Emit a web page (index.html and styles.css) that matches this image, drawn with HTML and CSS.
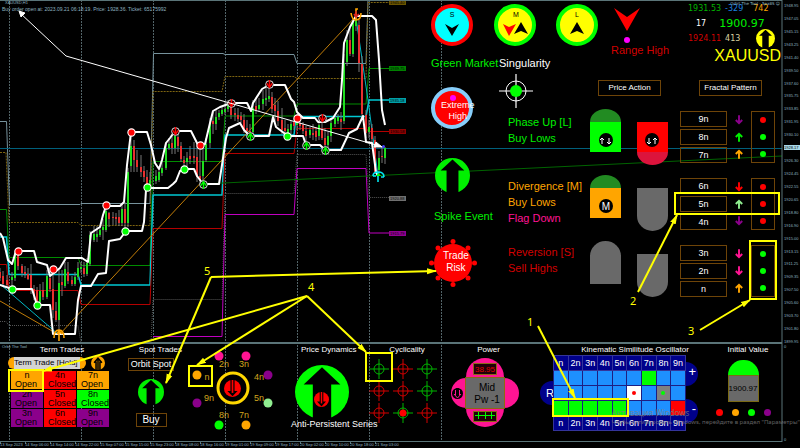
FILE: index.html
```
<!DOCTYPE html>
<html lang="en">
<head>
<meta charset="utf-8">
<meta name="viewport" content="width=device-width, initial-scale=1">
<title>XAUUSD,H1</title>
<link rel="stylesheet" href="styles.css">
</head>
<body>
<svg class="defs" aria-hidden="true">
  <symbol id="disc-up" viewBox="0 0 100 100"><circle cx="50" cy="50" r="50" fill="currentColor"/><path fill="#000" d="M50 4L84 36H67V100H33V36H16Z"/></symbol>
  <symbol id="disc-down" viewBox="0 0 100 100"><circle cx="50" cy="50" r="50" fill="currentColor"/><path fill="#000" d="M50 96L80 64H62V0H38V64H20Z"/><path fill="currentColor" d="M45 0H55V76H45Z"/></symbol>
  <symbol id="disc-line" viewBox="0 0 100 100"><circle cx="50" cy="50" r="50" fill="currentColor"/><path fill="none" stroke="#000" stroke-width="11" d="M50 100V14M22 48L50 16L78 48M36 40V100M64 40V100"/></symbol>
  <symbol id="up" viewBox="0 0 10 12"><path fill="none" stroke="currentColor" stroke-width="2.400" d="M5 12V2M1 6L5 2L9 6"/></symbol>
  <symbol id="down" viewBox="0 0 10 12"><path fill="none" stroke="currentColor" stroke-width="2.400" d="M5 0V10M1 6L5 10L9 6"/></symbol>
  <symbol id="target" viewBox="0 0 20 20"><path fill="none" stroke="currentColor" d="M0 10H20M10 0V20"/><circle cx="10" cy="10" r="5" fill="none" stroke="currentColor"/></symbol>
  <symbol id="red-dot" viewBox="0 0 10 10"><circle cx="5" cy="5" r="3.3" fill="#f00" stroke="#fff" stroke-width="1"/></symbol>
  <symbol id="green-dot" viewBox="0 0 10 10"><circle cx="5" cy="5" r="3.3" fill="#0f0" stroke="#fff" stroke-width="1"/></symbol>
  <symbol id="sell" viewBox="0 0 10 10"><circle cx="5" cy="5" r="3.5" fill="#200" stroke="#ddd" stroke-width=".9"/><path fill="none" stroke="#f00" stroke-width="1.2" d="M5 1V7M2.5 4L5 7.5L7.5 4"/></symbol>
  <symbol id="buy" viewBox="0 0 10 10"><circle cx="5" cy="5" r="3.5" fill="#020" stroke="#ddd" stroke-width=".9"/><path fill="none" stroke="#0f0" stroke-width="1.2" d="M5 9V3M2.5 6L5 2.5L7.5 6"/></symbol>
</svg>

<main class="terminal">
  <svg class="chart" viewBox="0 0 800 448" preserveAspectRatio="none" aria-label="XAUUSD hourly chart">
    <g class="grid"><path d="M9.500 0V442M81.500 0V442M153.500 0V442M225.500 0V442M297.500 0V442M369.500 0V442M441.500 0V442"/></g>
    <g class="levels">
      <path stroke="#76929c" d="M0 121.500H6.500L9.500 204.500H80L81 203.500H150L153.500 53.500H223L225 54.500H294L297 63.500H366L368 0"/>
      <path stroke="#7d6410" stroke-dasharray="2 1" d="M0 152.500H6L9 222.500H78L81 225.500H150L153 91.500H222L225 76.500H294L297 78.500H366L368 2.500H389"/>
      <path stroke="#008c00" d="M0 209.500H6.500L9 257.500H78L81 265.500H150L153 161.500H222L225 116H294L297 104H366L369 68.500H389"/>
      <path stroke="#00c8d2" stroke-width="1.500" d="M0 237H6.500L9 274.500H78L81 285H150L153 195H222L225 135H294L296 116.500H366L369 100H389"/>
      <path stroke="#b40000" d="M0 264.500H6.500L9 290.500H78L81 304.500H150L153 228.500H222L225 153.500H294L297 128.500H366L369 131.500H389"/>
      <path stroke="#555" stroke-dasharray="1 1" d="M0 321.500H6L9 325.500H78L81 343M151 343L153 299.500H222L225 193.500H294L297 154.500H366L369 197.500H389"/>
      <path stroke="#c000c0" d="M153 336.500H222L225 214.500H294L297 168.500H366L369 233H389"/>
    </g>
    <path class="bid" d="M0 148.500H782"/>
    <path class="trend green" d="M203 184L782 156"/>
    <path class="trend aqua" d="M0 284L59 335M356 18L368 100L378 176"/>
    <path class="trend orange" d="M0 301L59 335L356 16"/>
    <path class="wicks" d="M0 268V281M3 271V286M7 275V287M12 272V286M15 250V281M18 248V270M22 264V277M25 266V278M28 268V280M31 264V294M34 285V300M37 287V304M40 284V304M43 282V300M47 270V299M50 268V292M53 270V318M56 302V322M59 270V334M62 270V296M65 262V288M68 262V284M72 276V286M75 272V286M78 262V280M81 262V273M84 262V277M87 258V276M90 231V266M94 226V242M97 226V242M100 226V237M103 219V240M106 206V232M109 212V227M113 212V225M116 213V225M119 210V226M122 204V226M125 202V229M128 168V227M131 133V172M134 140V172M137 150V172M141 155V177M144 166V182M147 170V188M150 172V188M156 170V184M159 166V182M162 160V176M166 142V170M169 138V150M172 136V154M175 130V154M178 134V152M181 142V162M184 156V168M187 152V166M190 146V164M194 142V164M197 146V182M200 150V184M203 148V184M206 138V162M210 118V148M213 112V134M216 110V130M219 110V120M222 107V116M225 102V115M228 100V112M231 103V119M235 108V121M238 108V122M241 112V123M244 114V133M247 120V134M250 124V136M253 100V134M256 98V114M259 98V112M263 90V110M266 88V106M269 84V102M272 92V113M275 98V124M278 101V126M282 108V134M285 120V134M288 124V136M291 121V134M294 119V130M297 114V130M300 119V130M303 122V134M306 126V144M310 127V138M313 124V140M316 127V141M319 120V140M322 118V140M325 128V150M328 132V147M331 120V142M335 115V127M338 114V124M341 112V130M344 54V124M347 30V66M350 26V56M353 18V57M356 15V31M359 20V72M362 56V118M366 110V138M369 120V138M372 124V144M375 136V174M379 151V176M382 147V163M385 147V164"/>
    <path class="bodies up" d="M12 277V280M15 253V278M40 291V302M47 276V297M59 283V320M65 269V286M75 277V284M78 268V277M81 267V269M87 263V274M90 235V264M94 234V240M97 234V237M100 230V235M103 227V230M106 211V230M122 209V223M128 172V223M131 146V166M150 180V184M156 176V181M159 172V180M162 168V173M166 148V168M169 144V148M175 136V148M187 158V162M203 161V176M206 144V160M210 123V143M216 117V124M219 113V117M222 110V114M225 109V112M228 104V109M253 108V132M259 105V109M263 99V104M266 98V100M269 96V99M288 129V133M291 124V130M297 120V125M310 130V135M319 125V136M328 136V145M331 123V136M335 118V124M338 117V121M344 63V121M347 40V62M353 21V54M356 20V26M369 127V132M379 158V170M385 148V158"/>
    <path class="bodies down" d="M0 272V278M3 276V284M7 280V285M18 252V266M22 266V273M25 272V274M28 274V279M31 275V290M34 289V296M37 290V302M43 290V297M50 278V289M53 289V310M56 311V320M62 282V285M68 272V281M72 280V284M84 268V274M109 213V219M113 217V218M116 217V219M119 217V223M125 209V223M134 146V160M137 160V167M141 167V172M144 171V177M147 177V187M172 143V148M178 137V146M181 146V159M184 160V163M190 156V159M194 156V158M197 157V177M200 176V180M213 121V124M231 106V115M235 113V115M238 115V119M241 116V120M244 120V130M247 128V131M250 131V132M256 106V110M272 97V109M275 105V111M278 111V121M282 120V130M285 128V131M294 122V126M300 123V126M303 125V131M306 131V136M313 133V135M316 131V137M322 130V138M325 138V145M341 119V122M350 40V54M359 25V63M362 64V114M366 115V133M372 128V139M375 140V172M382 156V157"/>
    <g class="bands">
      <path d="M0 233L3 238L8 260L12 264L16 251H34L37 262L47 265L50 276L60 268L66 258H82L88 262L91 233L100 227L103 215L106 206H120L124 202L127 165L131 132H147L151 145L155 163L159 169L162 160L166 143L170 138L175 131H191L194 137L198 145L205 144L210 123L213 111L220 107L231 103H247L251 111L253 103L262 89L269 85H285L291 99L294 102L297 112L303 118H315L318 122H325L333 118L340 107L342 80L344 43L350 27L356 16H372L376 20L379 60L382 110L385 125"/>
      <path d="M0 285L12 289H32L37 305H50L53 334H75L78 300L81 286H91L98 274L106 273L109 241L120 239L126 231H142L144 222L146 190L148 188H168L173 184L176 181L180 171L185 169H194L197 176L203 184H219L222 165L226 138L229 128L240 123L244 130L250 136H269L273 117L276 127L288 136H303L306 145H320L325 150H341L349 133L357 129L363 116L366 142L372 143L376 172L378 176"/>
    </g>
    <g>
      <use href="#red-dot" x="13" y="246" width="11" height="11"/><use href="#red-dot" x="48" y="264" width="11" height="11"/><use href="#red-dot" x="101" y="200" width="11" height="11"/><use href="#red-dot" x="126" y="127" width="11" height="11"/><use href="#red-dot" x="195" y="140" width="11" height="11"/><use href="#red-dot" x="292" y="113" width="11" height="11"/>
      <use href="#green-dot" x="7" y="284" width="11" height="11"/><use href="#green-dot" x="32" y="300" width="11" height="11"/><use href="#green-dot" x="120" y="226" width="11" height="11"/><use href="#green-dot" x="142" y="182" width="11" height="11"/><use href="#green-dot" x="179" y="164" width="11" height="11"/><use href="#green-dot" x="282" y="131" width="11" height="11"/>
      <use href="#sell" x="170" y="126" width="11" height="11"/><use href="#sell" x="226" y="98" width="11" height="11"/><use href="#sell" x="264" y="79" width="11" height="11"/><use href="#sell" x="317" y="113" width="11" height="11"/>
      <use href="#buy" x="198" y="179" width="11" height="11"/><use href="#buy" x="245" y="131" width="11" height="11"/><use href="#buy" x="301" y="140" width="11" height="11"/><use href="#buy" x="320" y="145" width="11" height="11"/>
    </g>
    <path fill="none" stroke="#ffa500" stroke-width="1.600" d="M351 13Q352 20 356 20Q361 20 361 13M356 19V9H358"/><path fill="none" stroke="#d22" stroke-width="1.500" d="M356 11V17M354 14L356 17L359 14"/>
    <path fill="none" stroke="#ffa500" stroke-width="1.600" d="M54 338Q54 330 59 330Q64 330 64 338M59 330V341M57 334L59 331L62 334"/>
    <path fill="none" stroke="#00e5ee" stroke-width="1.600" d="M373 176Q373 172 378 172Q384 172 384 177M373 176H376M381 177H384M378 172V182"/><path fill="#0f0" d="M376 176L378.500 173L381 176Z"/>
    <g class="order"><path d="M20 13L66 56L383 147"/><path class="head" d="M19 11L25 13L21 17ZM382 147L374 147L376 142Z"/></g>
    <circle cx="383.500" cy="146.500" r="1.500" fill="#44f"/>
    <g class="tags">
      <rect x="389" y="0" width="17" height="5" fill="#6b5500"/><text x="390" y="4">1945.40</text>
      <rect x="389" y="66" width="17" height="5" fill="#008000"/><text x="390" y="70">1939.75</text>
      <rect x="389" y="98" width="17" height="5" fill="#00a0a8"/><text x="390" y="102">1935.18</text>
      <rect x="389" y="129" width="17" height="5" fill="#900000"/><text x="390" y="133">1930.58</text>
      <rect x="389" y="196" width="17" height="5" fill="#707070"/><text x="390" y="200">1920.88</text>
      <rect x="389" y="231" width="17" height="5" fill="#900090"/><text x="390" y="235">1915.79</text>
    </g>
    <path class="frame" d="M0 .500H782M782 0V442M0 441.500H782"/><path class="divider" d="M0 343H782"/>
    <path class="frame" d="M.500 442V444M25.500 442V444M50.500 442V444M75.500 442V444M100.500 442V444M125.500 442V444M150.500 442V444M175.500 442V444M200.500 442V444M225.500 442V444M250.500 442V444M275.500 442V444M300.500 442V444M325.500 442V444M350.500 442V444M375.500 442V444"/>
  </svg>

  <section class="dashboard">
    <header class="caption"><span class="symbol">XAUUSD,H1</span><span>Buy order open at: 2023.09.21 06:18:19. Price: 1928.36. Ticket: 65175992</span></header>

    <div class="col signals">
      <svg class="gauge" viewBox="0 0 42 42"><circle cx="21" cy="21" r="19" fill="#0ff" stroke="#f00" stroke-width="4"/><text x="21" y="13">S</text><path d="M14 20L21 32L28 20L21 24Z"/></svg>
      <p class="label lime">Green Market</p>
      <div class="ball">
        <svg class="gauge" viewBox="0 0 42 42"><circle cx="21" cy="21" r="19" fill="#f00" stroke="#87cefa" stroke-width="4"/><circle cx="22" cy="11" r="3" fill="#f0f"/></svg>
        <span class="over extreme">Extreme<br>High</span>
      </div>
      <svg class="spike lime"><use href="#disc-up"/></svg>
      <p class="label lime event">Spike Event</p>
      <div class="ball risk">
        <svg class="burr" viewBox="0 0 48 48"><g fill="#f00"><circle cx="24" cy="24" r="19"/><circle cx="24" cy="2.500" r="2.500"/><circle cx="24" cy="45.500" r="2.500"/><circle cx="2.500" cy="24" r="2.500"/><circle cx="45.500" cy="24" r="2.500"/><circle cx="9" cy="9" r="2.500"/><circle cx="39" cy="9" r="2.500"/><circle cx="9" cy="39" r="2.500"/><circle cx="39" cy="39" r="2.500"/></g></svg>
        <span class="over trade">Trade<br>Risk</span>
      </div>
    </div>

    <div class="col phases">
      <div class="pair-top">
        <svg class="gauge" viewBox="0 0 42 42"><circle cx="21" cy="21" r="19" fill="#ff0" stroke="#0f0" stroke-width="4"/><text x="22" y="13">M</text><path fill="#f00" d="M9 20L15 32L22 20L15 23Z"/><path d="M20 30L27 18L34 30L27 27Z"/></svg>
        <svg class="gauge" viewBox="0 0 42 42"><circle cx="21" cy="21" r="19" fill="#ff0" stroke="#0f0" stroke-width="4"/><text x="21" y="13">L</text><path d="M14 30L21 18L28 30L21 27Z"/></svg>
      </div>
      <p class="label singular">Singularity</p>
      <svg class="cross" viewBox="0 0 34 34"><g fill="none" stroke="#fff"><circle cx="17" cy="17" r="10"/><path d="M0 17H34M17 0V34" stroke-width="1.200"/></g><circle cx="17" cy="17" r="6" fill="#0f0"/></svg>
      <div class="phase lime">Phase Up [L]<br>Buy Lows</div>
      <div class="phase amber">Divergence [M]<br>Buy Lows<br><span class="pink">Flag Down</span></div>
      <div class="phase red">Reversion [S]<br>Sell Highs</div>
    </div>

    <div class="col action">
      <div class="range"><svg class="chev" viewBox="0 0 26 36"><path fill="#f00" d="M0 0L13 23L26 0L13 9Z"/><circle cx="13" cy="32" r="3" fill="#f0f"/></svg></div>
      <p class="label red high">Range High</p>
      <button class="box title" type="button">Price Action</button>
      <div class="caps">
        <svg viewBox="0 0 31 43"><path fill="#228b22" d="M0 13A15.500 13 0 0 1 31 13Z"/><path fill="#0f0" d="M0 13H31V43H0Z"/><circle cx="16" cy="31" r="7"/><path class="tick" d="M12 35V29M10 31L12 29L14 31M19 29V35M17 33L19 35L21 33"/></svg>
        <svg class="drop" viewBox="0 0 31 43"><path fill="#dc143c" d="M0 30A15.500 13 0 0 0 31 30Z"/><path fill="#f00" d="M0 0H31V30H0Z"/><circle cx="15" cy="18" r="7"/><path class="tick" d="M12 16V22M10 20L12 22L14 20M18 22V16M16 18L18 16L20 18"/></svg>
      </div>
      <div class="caps">
        <svg viewBox="0 0 31 43"><path fill="#228b22" d="M0 13A15.500 13 0 0 1 31 13Z"/><path fill="#ffa500" d="M0 13H31V43H0Z"/><circle cx="16" cy="31" r="7"/><text x="16" y="35">M</text></svg>
        <svg class="drop" viewBox="0 0 31 43"><path fill="#696969" d="M0 0H31V28A15.500 15 0 0 1 0 28Z"/></svg>
      </div>
      <div class="caps">
        <svg viewBox="0 0 31 43"><path fill="#696969" d="M0 43H31V15A15.500 15 0 0 0 0 15Z"/></svg>
        <svg class="drop" viewBox="0 0 31 43"><path fill="#696969" d="M0 0H31V28A15.500 15 0 0 1 0 28Z"/></svg>
      </div>
    </div>

    <div class="col fractal">
      <span class="tool-name">Orbit The Tool - 5ea8S ☺</span>
      <div class="quotes"><span class="green">1931.53</span><span class="blue">-329</span><span class="amber last">742</span></div>
      <div class="quotes mid"><span>17</span><strong class="lime">1900.97</strong></div>
      <div class="quotes"><span class="red">1924.11</span><span class="khaki">413</span><svg class="trend-icon"><use href="#disc-up"/></svg></div>
      <h1>XAUUSD</h1>
      <button class="box title" type="button">Fractal Pattern</button>
      <div class="group">
        <div class="keys"><button class="box" type="button">9n</button><button class="box" type="button">8n</button><button class="box" type="button">7n</button></div>
        <div class="arrows"><svg class="purple"><use href="#down"/></svg><svg class="lime"><use href="#up"/></svg><svg class="amber"><use href="#up"/></svg></div>
        <div class="lights"><i class="r"></i><i></i><i></i></div>
      </div>
      <div class="group">
        <div class="keys"><button class="box" type="button">6n</button><button class="box" type="button">5n</button><button class="box" type="button">4n</button></div>
        <div class="arrows"><svg class="bright-red"><use href="#down"/></svg><svg class="pale"><use href="#up"/></svg><svg class="purple"><use href="#down"/></svg></div>
        <div class="lights"><i class="r"></i><i class="r"></i><i class="r"></i></div>
      </div>
      <div class="group">
        <div class="keys"><button class="box" type="button">3n</button><button class="box" type="button">2n</button><button class="box" type="button">n</button></div>
        <div class="arrows"><svg class="pink"><use href="#down"/></svg><svg class="pink"><use href="#down"/></svg><svg class="amber"><use href="#up"/></svg></div>
        <div class="lights"><i></i><i></i><i></i></div>
      </div>
    </div>

    <div class="scale">
      <span>1948.95</span><span>1947.05</span><span>1945.15</span><span>1943.25</span><span>1941.40</span><span>1939.50</span><span>1937.60</span><span>1935.75</span><span>1933.85</span><span>1931.95</span><span>1930.10</span><span class="now">1928.17</span><span>1926.30</span><span>1924.45</span><span>1922.55</span><span>1920.65</span><span>1918.80</span><span>1916.90</span><span>1915.00</span><span>1913.15</span><span>1911.25</span><span>1909.35</span><span>1907.50</span><span>1905.60</span><span>1903.70</span><span>1901.80</span><span>1899.95</span>
    </div>
  </section>

  <section class="tools">
    <div class="panel term">
      <h2>Term Trades</h2>
      <div class="term-head"><span class="pill"><span>Term Trade [Hold]</span></span><svg class="mini amber"><use href="#disc-line"/></svg></div>
      <div class="cells">
        <button class="o" type="button"><b>n</b><span>Open</span></button><button class="r" type="button"><b>4n</b><span>Closed</span></button><button class="o" type="button"><b>7n</b><span>Open</span></button>
        <button class="p" type="button"><b>2n</b><span>Open</span></button><button class="r" type="button"><b>5n</b><span>Closed</span></button><button class="g" type="button"><b>8n</b><span>Closed</span></button>
        <button class="p" type="button"><b>3n</b><span>Open</span></button><button class="r" type="button"><b>6n</b><span>Closed</span></button><button class="p" type="button"><b>9n</b><span>Open</span></button>
      </div>
    </div>

    <div class="panel spot">
      <h2>Spot Trades</h2>
      <button class="box orbit" type="button">Orbit Spot</button>
      <svg class="spot-icon lime"><use href="#disc-up"/></svg>
      <button class="box buy" type="button">Buy</button>
    </div>

    <div class="panel wheel">
      <svg viewBox="0 0 90 90">
        <g stroke="none"><circle cx="33" cy="12" r="4.500" fill="#ff1493"/><circle cx="60" cy="12" r="4.500" fill="#ff1493"/><circle cx="82" cy="31" r="4.500" fill="#8b008b"/><circle cx="82" cy="59" r="4.500" fill="#90ee90"/><circle cx="60" cy="81" r="4.500" fill="#ffa500"/><circle cx="33" cy="81" r="4.500" fill="#0f0"/><circle cx="11" cy="59" r="4.500" fill="#8b008b"/><circle cx="11" cy="31" r="4.500" fill="#ffa500"/></g>
        <circle cx="47" cy="44" r="15" fill="#000" stroke="#ffd700" stroke-width="3"/>
        <use href="#disc-down" x="38" y="36" width="17" height="17" color="#f00"/>
        <text x="21" y="36">n</text><text x="38" y="23">2n</text><text x="58" y="23">3n</text><text x="73" y="36">4n</text><text x="73" y="57">5n</text><text x="58" y="74">7n</text><text x="38" y="74">8n</text><text x="23" y="57">9n</text>
      </svg>
    </div>

    <div class="panel dynamics">
      <h2>Price Dynamics</h2>
      <svg viewBox="0 0 54 54"><use href="#disc-up" width="54" height="54" color="#0f0"/><use href="#disc-down" x="19" y="27" width="15" height="15" color="#f00"/></svg>
      <p>Anti-Persistent Series</p>
    </div>

    <div class="panel cycle">
      <h2>Cyclicality</h2>
      <div class="targets">
        <svg class="green"><use href="#target"/></svg><svg class="red"><use href="#target"/></svg><svg class="green"><use href="#target"/></svg>
        <svg class="red"><use href="#target"/></svg><svg class="red"><use href="#target"/></svg><svg class="green"><use href="#target"/></svg>
        <svg class="red"><use href="#target"/></svg><svg class="green"><use href="#target"/><circle cx="10" cy="10" r="3.500" fill="#f00"/></svg><svg class="red"><use href="#target"/></svg>
      </div>
    </div>

    <div class="panel power">
      <h2>Power</h2>
      <svg viewBox="0 0 70 70">
        <g fill="#ff1493"><circle cx="35" cy="20" r="19"/><circle cx="35" cy="51" r="19"/><circle cx="16" cy="36" r="15"/><circle cx="54" cy="36" r="15"/></g>
        <path fill="#696969" stroke="#8b6914" d="M15.500 20.500H54.500V51.500H15.500Z"/>
        <path fill="#200008" stroke="#8b6914" d="M23.500 6.500H46.500V17.500H23.500ZM23.500 54.500H46.500V64.500H23.500Z"/>
        <use href="#disc-down" x="2" y="31" width="11" height="11" color="#000"/><path fill="none" stroke="#ff1493" d="M5.500 33V38M9.500 33V38M4 37L7.500 41L11 37"/>
        <text class="reading" x="35" y="15">38.95</text><text x="37" y="34">Mid</text><text x="37" y="46">Pw -1</text>
        <path stroke="#0f0" d="M25 58.500H45M28.500 55V62M35.500 55V62M41.500 55V62"/>
      </svg>
    </div>

    <div class="panel osc">
      <h2>Kinematic Similitude Oscillator</h2>
      <div class="osc-body">
        <span class="knob rr">R</span><span class="knob plus">+</span><span class="knob minus">-</span>
        <table>
          <tr><th>n</th><th>2n</th><th>3n</th><th>4n</th><th>5n</th><th>6n</th><th>7n</th><th>8n</th><th>9n</th></tr>
          <tr><td></td><td></td><td></td><td></td><td></td><td></td><td class="g"></td><td></td><td></td></tr>
          <tr><td></td><td></td><td></td><td></td><td></td><td class="w"><i></i></td><td></td><td class="k"><i></i></td><td></td></tr>
          <tr><td class="g"></td><td class="g"></td><td class="g"></td><td class="g"></td><td class="g"></td><td></td><td></td><td></td><td class="r"></td></tr>
          <tr><th>n</th><th>2n</th><th>3n</th><th>4n</th><th>5n</th><th>6n</th><th>7n</th><th>8n</th><th>9n</th></tr>
        </table>
      </div>
    </div>

    <div class="panel initial">
      <h2>Initial Value</h2>
      <div class="dome"></div>
      <div class="value">1900.97</div>
      <div class="beads"><i class="r"></i><i class="o"></i><i class="g"></i><i class="p"></i></div>
    </div>

    <div class="sub-scale"><span>0</span><span>0</span></div>
    <span class="sub-name">Orbit The Tool</span>
  </section>

  <footer class="times"><span>13 Sep 2023</span><span>14 Sep 06:00</span><span>14 Sep 14:00</span><span>14 Sep 22:00</span><span>15 Sep 07:00</span><span>15 Sep 15:00</span><span>15 Sep 23:00</span><span>18 Sep 08:00</span><span>18 Sep 16:00</span><span>19 Sep 01:00</span><span>19 Sep 09:00</span><span>19 Sep 17:00</span><span>20 Sep 02:00</span><span>20 Sep 10:00</span><span>20 Sep 18:00</span><span>21 Sep 03:00</span></footer>

  <div class="watermark"><strong>Активация Windows</strong><span>Чтобы активировать Windows, перейдите в раздел "Параметры"</span></div>

  <svg class="notes" viewBox="0 0 800 448" preserveAspectRatio="none">
    <defs><marker id="tip" markerUnits="userSpaceOnUse" markerWidth="10" markerHeight="8" refX="9" refY="4" orient="auto"><path fill="#ff0" stroke="none" d="M0 1L10 4L0 7Z"/></marker></defs>
    <path d="M9 370H43V391H9ZM189 366H212V386H189ZM366 353H392V381H366ZM553 399H628V416H553ZM675 193H779V214H675ZM750 241H776V299H750Z"/>
    <g marker-end="url(#tip)"><path marker-end="url(#tip)" d="M211 277L166 383"/><path d="M211 277L436 271"/><path d="M307 296L43 371"/><path d="M307 296L197 365"/><path d="M307 296L366 352"/><path d="M538 326L575 398"/><path d="M638 292L677 215"/><path d="M700 330L750 300"/></g>
    <text x="204" y="275">5</text><text x="308" y="291">4</text><text x="527" y="326">1</text><text x="630" y="305">2</text><text x="688" y="335">3</text>
  </svg>
</main>
</body>
</html>
```

FILE: styles.css
```
* { box-sizing: border-box; }
body { margin: 0; background: #000; color: #fff; font-family: "Liberation Sans", Arial, sans-serif; font-size: 11px; }
p, h1, h2 { margin: 0; font-weight: normal; }
button { font: inherit; color: inherit; padding: 0; margin: 0; cursor: pointer; }
svg { display: block; overflow: visible; }
.defs { position: absolute; width: 0; height: 0; }

.terminal { position: relative; min-height: 100vh; overflow: hidden; display: flex; flex-direction: column; }
.chart, .notes { position: absolute; top: 0; left: 0; width: 100%; height: 448px; pointer-events: none; }

.lime { color: #00f000; }
.green { color: #00b400; }
.red { color: #d20000; }
.bright-red { color: #f00; }
.amber { color: #ffa500; }
.pink { color: #ff1493; }
.purple { color: #8b008b; }
.pale { color: #90ee90; }
.blue { color: #1e80e0; }
.khaki { color: #d8d0a0; }

/* Chart layers */
.grid path { stroke: #526468; stroke-dasharray: 2 1; fill: none; }
.levels path { fill: none; }
.bid { stroke: #00607c; }
.trend { fill: none; }
.trend.green { stroke: #006400; }
.trend.aqua { stroke: #00b8c4; }
.trend.orange { stroke: #c07c08; }
.wicks { stroke: #777; fill: none; }
.bodies { fill: none; stroke-width: 2; }
.bodies.up { stroke: #1edc1e; }
.bodies.down { stroke: #e83030; }
.bands path { fill: none; stroke: #fff; stroke-width: 2; stroke-linejoin: round; }
.order path { fill: none; stroke: #fff; stroke-width: 1; }
.order .head { fill: #fff; }
.tags text { font-size: 4px; fill: #000; }
.frame { fill: none; stroke: #5a7478; }
.divider { fill: none; stroke: #5a7478; stroke-width: 2; }

/* Upper dashboard */
.dashboard { position: relative; display: grid; grid-template-columns: 1fr 72px 96px 90px 102px 18px; min-height: 344px; }
.caption { display: flex; flex-direction: column; padding-left: 2px; color: #8fb4c0; font-size: 5px; line-height: 6px; white-space: nowrap; }
.caption .symbol { font-size: 4px; padding-left: 3px; }
.col { display: flex; flex-direction: column; align-items: flex-start; }
.label { line-height: 12px; white-space: nowrap; }
.box { background: transparent; border: 1px solid #6e4408; font-size: 9px; line-height: 12px; text-align: center; white-space: nowrap; }
.title { height: 16px; width: 63px; font-size: 8px; }

.gauge { width: 42px; height: 42px; flex: none; }
.gauge text { font-size: 7px; text-anchor: middle; }
.signals { padding: 4px 0 0 9px; }
.signals .label { margin-top: 11px; }
.ball { position: relative; margin-top: 18px; }
.over { position: absolute; text-align: center; color: #fff; white-space: nowrap; }
.extreme { left: 10px; top: 13px; font-size: 9px; line-height: 11px; }
.spike { width: 35px; height: 35px; margin: 29px 0 0 4px; }
.signals .event { margin: 17px 0 0 3px; }
.risk { margin-top: 17px; margin-left: -2px; }
.burr { width: 48px; height: 48px; }
.trade { left: 14px; top: 11px; font-size: 10px; line-height: 12px; }

.phases { padding-top: 4px; }
.pair-top { display: flex; gap: 20px; }
.singular { margin: 11px 0 0 5px; }
.cross { width: 34px; height: 34px; margin: 5px 0 6px 5px; }
.phase { padding-left: 14px; line-height: 16px; white-space: nowrap; height: 64px; }
.phase + .phase { height: 66px; }

.action { padding-top: 8px; }
.range { width: 74px; display: flex; justify-content: center; }
.chev { width: 26px; height: 36px; }
.high { padding-left: 21px; }
.action .title { margin: 24px 0 13px 8px; }
.caps { display: flex; gap: 16px; margin-bottom: 10px; }
.caps svg { width: 31px; height: 43px; }
.caps .drop { margin-top: 13px; }
.caps text { fill: #fff; font-size: 10px; text-anchor: middle; }
.tick { fill: none; stroke: #fff; }

.fractal { position: relative; font-family: "DejaVu Sans", Verdana, sans-serif; }
.tool-name { position: absolute; right: 2px; top: 1px; font-size: 4px; line-height: 6px; color: #8fb4c0; }
.quotes { display: flex; align-items: center; gap: 4px; height: 17px; padding: 0 7px 0 8px; font-size: 8px; width: 100%; }
.quotes .last { margin-left: 6px; }
.quotes.mid { height: 13px; padding-left: 16px; gap: 13px; }
.quotes strong { font-size: 11px; font-weight: normal; }
.trend-icon { width: 19px; height: 19px; color: #ff0; margin-left: auto; flex: none; }
.fractal h1 { align-self: flex-end; padding-right: 1px; font: 16px/17px "Liberation Sans", Arial, sans-serif; color: #ff0; }
.fractal .box { font-family: "Liberation Sans", Arial, sans-serif; }
.fractal .title { margin: 16px 0 15px 19px; }
.group { display: flex; margin-bottom: 15px; height: 52px; }
.keys { display: grid; grid-auto-rows: 16px; gap: 1px; width: 47px; align-content: space-between; }
.arrows, .lights { display: flex; flex-direction: column; justify-content: space-around; align-items: center; width: 24px; }
.arrows svg { width: 8px; height: 10px; }
.lights { border: 1px solid #6e4408; }
.lights i, .beads i { width: 6px; height: 6px; border-radius: 50%; background: #0f0; }
i.r { background: #f00; }

.scale { display: flex; flex-direction: column; justify-content: space-between; padding: 3px 0 0 2px; font-size: 4px; line-height: 5px; color: #8fb4c0; }
.scale .now { background: #a8d8e8; color: #000; }

/* Lower tool window */
.tools { position: relative; display: grid; grid-template-columns: 116fr 70fr 95fr 86fr 72fr 91fr 174fr 78fr 18px; min-height: 98px; }
.panel { min-width: 0; display: flex; flex-direction: column; align-items: center; }
.panel h2 { font-size: 8px; line-height: 11px; white-space: nowrap; }
.term { padding-left: 8px; }
.term-head { display: flex; align-items: center; gap: 5px; align-self: flex-start; height: 16px; }
.pill { background: #ffa500; border-radius: 6px; padding: 0 6px; width: 78px; height: 12px; }
.pill span { display: block; height: 12px; background: #d3d3d3; color: #000; font-size: 8px; line-height: 12px; white-space: nowrap; }
.mini { width: 14px; height: 14px; }
.cells { display: grid; grid-template-columns: repeat(3, 32px); grid-auto-rows: 18px; gap: 1px; align-self: flex-start; padding-left: 3px; }
.cells button { border: 0; overflow: hidden; color: #000; font-size: 9px; line-height: 9px; display: block; text-align: left; white-space: nowrap; background: #f00; }
.cells b { display: block; font-weight: normal; text-align: center; }
.cells span { padding-left: 4px; }
.cells .o { background: #ffa500; }
.cells .p { background: #8b008b; }
.cells .g { background: #0f0; }

.spot h2 { align-self: flex-end; padding-right: 4px; }
.orbit { width: 46px; height: 13px; margin-top: 3px; font-size: 9px; line-height: 11px; }
.spot-icon { width: 26px; height: 26px; margin: 8px 0; }
.buy { width: 31px; height: 14px; font-size: 10px; }

.wheel { align-items: flex-start; }
.wheel svg { width: 90px; height: 90px; }
.wheel text { fill: #d2a51e; font-size: 9px; text-anchor: middle; }

.dynamics { align-items: flex-start; padding-left: 10px; }
.dynamics h2 { padding-left: 10px; }
.dynamics svg { width: 54px; height: 54px; margin: 10px 0 0 4px; }
.dynamics p { font-size: 9px; line-height: 11px; white-space: nowrap; }

.cycle h2 { padding-left: 8px; }
.targets { display: grid; grid-template-columns: repeat(3, 20px); grid-auto-rows: 20px; column-gap: 4px; row-gap: 2px; padding-top: 4px; }
.targets svg { width: 20px; height: 20px; }

.power h2 { padding-left: 8px; }
.power svg { width: 70px; height: 70px; margin-top: 2px; }
.power text { font-size: 10px; text-anchor: middle; }
.power .reading { fill: #e00000; font-size: 8px; }

.osc h2 { padding-left: 36px; }
.osc-body { position: relative; margin-left: 5px; }
.osc table { position: relative; border-collapse: collapse; table-layout: fixed; width: 133px; }
.osc th, .osc td { border: 1px solid #1e1e82; padding: 0; height: 15px; background: #1e90ff; font-size: 9px; line-height: 12px; font-weight: normal; text-align: center; }
.osc th { background: #00008b; border-color: #34349a; }
.osc .g { background: #0f0; }
.osc .r { background: #f00; }
.osc .w { background: #fff; }
.osc .k { background: #808080; }
.osc td i { display: block; width: 4px; height: 4px; margin: auto; border-radius: 50%; background: #f00; }
.osc .k i { background: #0f0; }
.knob { position: absolute; width: 24px; height: 24px; border-radius: 50%; background: #00008b; line-height: 24px; }
.rr { left: -13px; top: 26px; padding-left: 6px; }
.plus, .minus { right: -12px; padding-right: 2px; text-align: right; font-size: 13px; line-height: 20px; }
.plus { top: 7px; }
.minus { top: 44px; }

.initial h2 { padding-left: 10px; }
.dome { width: 31px; height: 15px; margin-top: 5px; border-radius: 16px 16px 0 0; background: #0f0; }
.value { width: 31px; height: 27px; border: 1px solid #7a6a14; background: #696969; color: #000; font-size: 8px; line-height: 25px; display: flex; justify-content: center; }
.beads { display: flex; gap: 9px; padding-top: 7px; }
.beads i { width: 7px; height: 7px; }
.beads .r { background: #f00; }
.beads .o { background: #ffa500; }
.beads .p { background: #8b008b; }

.sub-scale { display: flex; flex-direction: column; justify-content: space-between; padding-left: 2px; font-size: 4px; line-height: 5px; color: #8fb4c0; }
.sub-name { position: absolute; left: 2px; top: 0; font-size: 4px; line-height: 5px; color: #8fb4c0; }
.times { position: relative; display: grid; grid-template-columns: repeat(32, 1fr); line-height: 6px; font-size: 4px; color: #8fb4c0; white-space: nowrap; }
.watermark { position: absolute; right: 0; top: 408px; display: flex; flex-direction: column; color: #808080; opacity: .75; font-family: "Noto Sans", sans-serif; font-size: 6px; line-height: 8px; white-space: nowrap; }
.watermark strong { font-size: 8px; font-weight: normal; line-height: 10px; }

/* Numbered call-outs */
.notes path { fill: none; stroke: #ff0; stroke-width: 2; }
.notes marker path { fill: #ff0; stroke: none; }
.notes text { fill: #ff0; font: 11px "Noto Sans", sans-serif; }
```
